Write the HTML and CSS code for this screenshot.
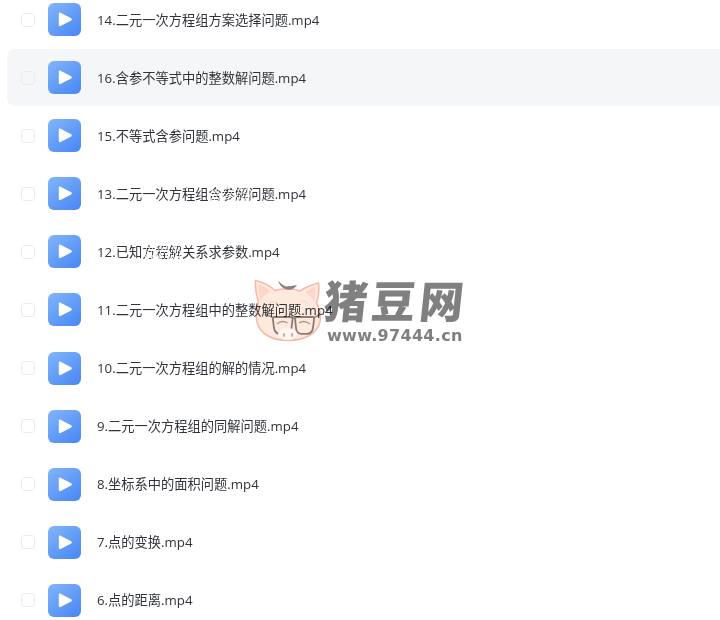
FILE: index.html
```html
<!DOCTYPE html>
<html lang="zh-CN">
<head>
<meta charset="utf-8">
<title>文件列表</title>
<link rel="stylesheet" href="styles.css">
</head>
<body>
<svg class="sprite" width="0" height="0" aria-hidden="true">
  <defs>
    <linearGradient id="blue" x1="0.1" y1="0" x2="0.9" y2="1">
      <stop offset="0" stop-color="#7fb3f9"/>
      <stop offset="1" stop-color="#4a88f4"/>
    </linearGradient>
    <symbol id="play" viewBox="0 0 33 33">
      <rect width="33" height="33" rx="6" fill="url(#blue)"/>
      <path d="M10.8 10.7c0-1 .9-1.5 1.7-1L23.2 15.3c.8.5.8 1.7 0 2.2L12.5 23.1c-.8.5-1.7-.1-1.7-1z" fill="#fff"/>
    </symbol>
  </defs>
</svg>
<main class="list">
  <div class="row"><span class="check"></span><svg class="icon"><use href="#play"/></svg><span class="name">14.二元一次方程组方案选择问题.mp4</span></div>
  <div class="row row-hover"><span class="check"></span><svg class="icon"><use href="#play"/></svg><span class="name">16.含参不等式中的整数解问题.mp4</span></div>
  <div class="row"><span class="check"></span><svg class="icon"><use href="#play"/></svg><span class="name">15.不等式含参问题.mp4</span></div>
  <div class="row"><span class="check"></span><svg class="icon"><use href="#play"/></svg><span class="name">13.二元一次方程组含参解问题.mp4</span></div>
  <div class="row"><span class="check"></span><svg class="icon"><use href="#play"/></svg><span class="name">12.已知方程解关系求参数.mp4</span></div>
  <div class="row"><span class="check"></span><svg class="icon"><use href="#play"/></svg><span class="name">11.二元一次方程组中的整数解问题.mp4</span></div>
  <div class="row"><span class="check"></span><svg class="icon"><use href="#play"/></svg><span class="name">10.二元一次方程组的解的情况.mp4</span></div>
  <div class="row"><span class="check"></span><svg class="icon"><use href="#play"/></svg><span class="name">9.二元一次方程组的同解问题.mp4</span></div>
  <div class="row"><span class="check"></span><svg class="icon"><use href="#play"/></svg><span class="name">8.坐标系中的面积问题.mp4</span></div>
  <div class="row"><span class="check"></span><svg class="icon"><use href="#play"/></svg><span class="name">7.点的变换.mp4</span></div>
  <div class="row"><span class="check"></span><svg class="icon"><use href="#play"/></svg><span class="name">6.点的距离.mp4</span></div>
</main>
<div class="smudge smudge-a"></div>
<div class="smudge smudge-b"></div>
<div class="mark">
  <svg class="pig" viewBox="0 0 68 66" aria-hidden="true">
    <path d="M1.5 3.5C9 5 16 9 21 13.5C28 11 39 11 46 14C52 10 58 7.5 64.5 6C65.5 13 64.5 20 62.5 26C66 32 67 39 66 45C63 57 50 63.5 34 63.5C18 63.5 6 57 3 45C1.5 38 2 31 4.5 25C2 18 1 10 1.5 3.5Z" fill="#fde9de" stroke="#f9b7a7" stroke-width="1.5"/>
    <path d="M4.5 7C9 8.5 13 11 16 14.5C11.5 17 8.5 20 6.5 23.5C5 18 4.5 12 4.5 7ZM61.5 9.5C57 11 53.5 13 51 15.5C55.5 18 58 21 60 24.5C61 19.5 61.500 14 61.5 9.5Z" fill="#fcd6c9"/>
    <path d="M24 4C27 6 29 8.500 32 9.500C35 9.500 39 8.500 43 8C41 11 38 13 34.500 12.800C30 12.500 26 9 24 4Z" fill="#8f8078"/>
    <path d="M15 27Q19 22.500 23 26M46 25.500Q50 22 54 26.500" fill="none" stroke="#f6d8c2" stroke-width="1.200"/>
    <path d="M11 37L19 40.500M60 40.500L66 37.500" fill="none" stroke="#a08c84" stroke-width="1.700"/>
    <path d="M20 40H36.500Q39 40 38.500 43L37.500 51Q37 56.800 31.500 56.800H26Q21 56.800 20 51L19 43Q18.800 40 20 40Z" fill="none" stroke="#8f7b73" stroke-width="1.800"/>
    <path d="M43 40H58.500Q60.500 40 60 43L59 51Q58 56.800 53 56.800H47.500Q42.500 56.800 42 51L41.200 43Q41 40 43 40Z" fill="none" stroke="#8f7b73" stroke-width="1.800"/>
    <path d="M38.500 41.500Q40 40.500 41.300 41.500" fill="none" stroke="#8f7b73" stroke-width="1.600"/>
    <path d="M23 47Q28 42.500 33.500 46M45 46Q50 42.500 56 47" fill="none" stroke="#ab968b" stroke-width="1.300"/>
    <ellipse cx="33.500" cy="57" rx="9.500" ry="6" fill="#fff8f4"/>
    <ellipse cx="30" cy="58" rx="1.300" ry="2" fill="#f2a492"/>
    <ellipse cx="38" cy="58" rx="1.300" ry="2" fill="#f2a492"/>
  </svg>
  <div class="brand">
    <span class="brand-name">猪豆网</span>
    <span class="brand-url">www.97444.cn</span>
  </div>
</div>
</body>
</html>
```
FILE: styles.css
```css
html, body {
  margin: 0;
  height: 100%;
  overflow: hidden;
  background: #fff;
}
body {
  position: relative;
  font-family: "Open Sans", "Noto Sans CJK SC", sans-serif;
}
.sprite {
  position: absolute;
}
.list {
  display: flex;
  flex-direction: column;
  gap: 1.1px;
  margin-top: -9px;
  padding-left: 7px;
}
.row {
  display: flex;
  align-items: center;
  flex: none;
  height: 57px;
  padding-left: 14px;
  border-radius: 8px 0 0 8px;
}
.row-hover {
  background: #f5f6f8;
}
.check {
  flex: none;
  box-sizing: border-box;
  width: 14px;
  height: 14px;
  border: 1px solid #ebebed;
  border-radius: 3.5px;
  background: #fff;
}
.row-hover .check {
  background: #f5f6f8;
}
.icon {
  flex: none;
  width: 33px;
  height: 33px;
  margin-left: 13px;
}
.name {
  margin-left: 16px;
  font-size: 13.25px;
  line-height: 20px;
  color: #30343a;
  white-space: nowrap;
}
.mark {
  position: absolute;
  left: 254px;
  top: 277px;
  display: flex;
  gap: 2px;
  mix-blend-mode: multiply;
}
.pig {
  display: block;
  flex: none;
  width: 68px;
  height: 66px;
}
.brand {
  display: flex;
  flex-direction: column;
  gap: 8px;
}
.brand-name {
  font-family: "Noto Sans CJK SC", sans-serif;
  font-size: 44px;
  font-weight: 900;
  line-height: 44px;
  letter-spacing: 4px;
  color: #808080;
  transform: skewX(-6deg);
}
.brand-url {
  margin-left: 3px;
  font-family: "DejaVu Sans", sans-serif;
  font-size: 16px;
  font-weight: 700;
  line-height: 14px;
  letter-spacing: 0.3px;
  color: #808080;
}
.smudge {
  position: absolute;
  background: repeating-linear-gradient(115deg, transparent 0 2px, rgba(255, 255, 255, 0.75) 2px 3px);
}
.smudge-a {
  left: 208px;
  top: 187px;
  width: 44px;
  height: 14px;
}
.smudge-b {
  left: 145px;
  top: 245px;
  width: 39px;
  height: 14px;
}
```
